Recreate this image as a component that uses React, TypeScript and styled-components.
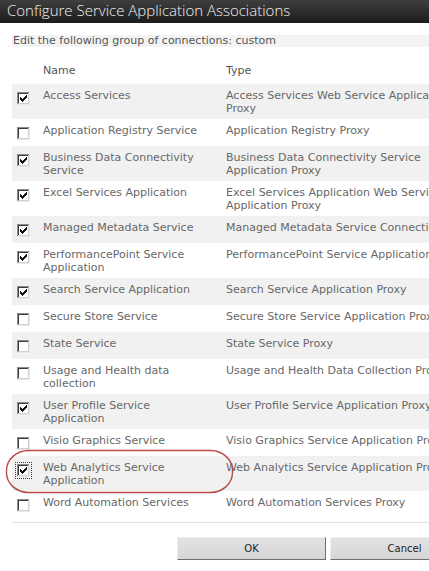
import * as React from 'react';
import styled, { createGlobalStyle, css } from 'styled-components';

interface Association {
  name: string;
  type: string[];
  checked: boolean;
  focused?: boolean;
}

// type lines are kept as the dialog wraps them
const associations: Association[] = [
  { name: 'Access Services', type: ['Access Services Web Service Application', 'Proxy'], checked: true },
  { name: 'Application Registry Service', type: ['Application Registry Proxy'], checked: false },
  { name: 'Business Data Connectivity Service', type: ['Business Data Connectivity Service', 'Application Proxy'], checked: true },
  { name: 'Excel Services Application', type: ['Excel Services Application Web Service', 'Application Proxy'], checked: true },
  { name: 'Managed Metadata Service', type: ['Managed Metadata Service Connection Proxy'], checked: true },
  { name: 'PerformancePoint Service Application', type: ['PerformancePoint Service Application Proxy'], checked: true },
  { name: 'Search Service Application', type: ['Search Service Application Proxy'], checked: true },
  { name: 'Secure Store Service', type: ['Secure Store Service Application Proxy'], checked: false },
  { name: 'State Service', type: ['State Service Proxy'], checked: false },
  { name: 'Usage and Health data collection', type: ['Usage and Health Data Collection Proxy'], checked: false },
  { name: 'User Profile Service Application', type: ['User Profile Service Application Proxy'], checked: true },
  { name: 'Visio Graphics Service', type: ['Visio Graphics Service Application Proxy'], checked: false },
  { name: 'Web Analytics Service Application', type: ['Web Analytics Service Application Proxy'], checked: true, focused: true },
  { name: 'Word Automation Services', type: ['Word Automation Services Proxy'], checked: false },
];

const GlobalStyle = createGlobalStyle`
  html, body {
    margin: 0;
    padding: 0;
    background: #ffffff;
    overflow: hidden;
  }
`;

const Page = styled.div`
  position: relative;
  width: 429px;
  height: 571px;
  overflow: hidden;
  background: #ffffff;
`;

const Dialog = styled.div`
  width: 491px;
  font-family: 'DejaVu Sans', Verdana, sans-serif;
  font-size: 11px;
  line-height: 13px;
  color: #686868;
`;

const TitleBar = styled.div`
  height: 23px;
  padding-left: 7px;
  background: linear-gradient(#3e3e3e, #1c1c1c);
  color: #f2f2f2;
  font-family: 'Open Sans', 'DejaVu Sans', sans-serif;
  font-weight: 300;
  font-size: 15px;
  line-height: 20px;
  white-space: nowrap;
`;

const Content = styled.div`
  padding: 12px 0 0 12px;
`;

const Intro = styled.div`
  height: 12px;
  padding-left: 1px;
  background: #f3f3f3;
  color: #555555;
  line-height: 12px;
  white-space: nowrap;
`;

const rowGrid = css`
  display: grid;
  grid-template-columns: 31px 183px 1fr;
  box-sizing: border-box;
`;

const HeaderRow = styled.div`
  ${rowGrid};
  height: 37px;
  padding-top: 17px;
  color: #555555;
`;

const Row = styled.div<{ $striped: boolean }>`
  ${rowGrid};
  min-height: 27px;
  padding: 5px 0 4px;
  background: ${({ $striped }) => ($striped ? '#f1f1f1' : 'transparent')};
`;

const CheckCell = styled.div`
  padding: 3px 0 0 5px;
`;

const NameCell = styled.div`
  padding-right: 14px;
`;

const TypeCell = styled.div`
  white-space: nowrap;
`;

const TypeLine = styled.div``;

const Box = styled.span<{ $focused?: boolean }>`
  display: block;
  width: 13px;
  height: 13px;
  ${({ $focused }) =>
    $focused &&
    css`
      outline: 1px dotted #3a3a3a;
      outline-offset: 1px;
    `}
`;

const Footer = styled.div`
  display: flex;
  justify-content: flex-end;
  gap: 4px;
  margin: 4px 0 0 12px;
  padding: 14px 12px 0 0;
  border-top: 1px solid #e2e2e2;
`;

const Button = styled.button`
  width: 149px;
  height: 23px;
  padding: 0;
  background: linear-gradient(#e2e2e2, #d6d6d6);
  border: 1px solid;
  border-color: #eeeeee #6e6e6e #6e6e6e #eeeeee;
  color: #222222;
  font-family: 'DejaVu Sans', Tahoma, sans-serif;
  font-size: 10px;
`;

const Annotation = styled.svg`
  position: absolute;
  left: 5px;
  top: 449px;
`;

const Checkbox = ({ checked, focused }: { checked: boolean; focused?: boolean }) => (
  <Box $focused={focused}>
    <svg width="13" height="13" viewBox="0 0 13 13" shapeRendering="crispEdges">
      <rect x="0" y="0" width="13" height="13" fill="#ffffff" />
      <rect x="0" y="0" width="12" height="1" fill="#8c8c8c" />
      <rect x="0" y="0" width="1" height="12" fill="#8c8c8c" />
      <rect x="1" y="1" width="10" height="1" fill="#3c3c3c" />
      <rect x="1" y="1" width="1" height="10" fill="#3c3c3c" />
      <rect x="12" y="0" width="1" height="13" fill="#e8e8e8" />
      <rect x="0" y="12" width="13" height="1" fill="#e8e8e8" />
      <rect x="11" y="1" width="1" height="11" fill="#cfcfcf" />
      <rect x="1" y="11" width="11" height="1" fill="#cfcfcf" />
      {checked && (
        <path
          d="M9 3h1v3H9zM8 4h1v3H8zM7 5h1v3H7zM6 6h1v3H6zM5 7h1v3H5zM4 6h1v3H4zM3 5h1v3H3z"
          fill="#111111"
        />
      )}
    </svg>
  </Box>
);

export default function App() {
  return (
    <Page>
      <GlobalStyle />
      <Dialog>
        <TitleBar>Configure Service Application Associations</TitleBar>
        <Content>
          <Intro>Edit the following group of connections: custom</Intro>
          <HeaderRow>
            <span />
            <span>Name</span>
            <span>Type</span>
          </HeaderRow>
          {associations.map((item, index) => (
            <Row key={item.name} $striped={index % 2 === 0}>
              <CheckCell>
                <Checkbox checked={item.checked} focused={item.focused} />
              </CheckCell>
              <NameCell>{item.name}</NameCell>
              <TypeCell>
                {item.type.map(line => (
                  <TypeLine key={line}>{line}</TypeLine>
                ))}
              </TypeCell>
            </Row>
          ))}
        </Content>
        <Footer>
          <Button>OK</Button>
          <Button>Cancel</Button>
        </Footer>
      </Dialog>
      <Annotation width="230" height="46" viewBox="0 0 230 46">
        <rect x="1.5" y="1.5" width="226" height="42" rx="22" ry="20" fill="none" stroke="#b84a48" strokeWidth="1.4" />
      </Annotation>
    </Page>
  );
}
